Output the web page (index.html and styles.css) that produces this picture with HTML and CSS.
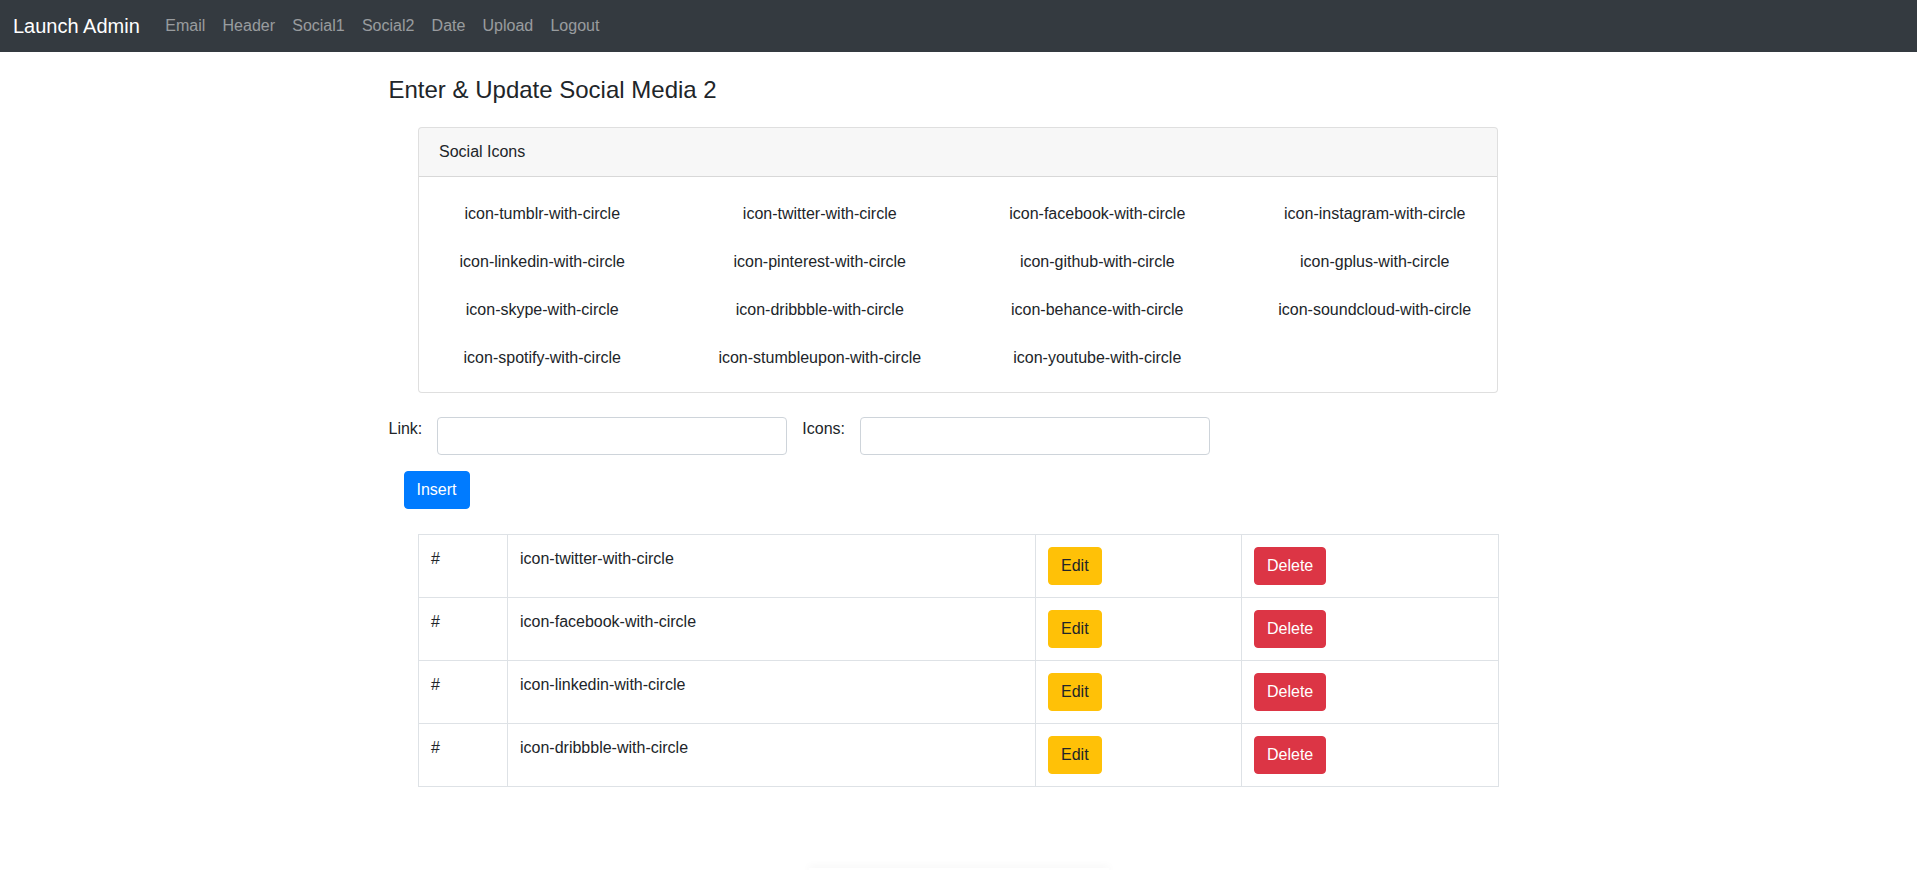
FILE: index.html
```html
<!DOCTYPE html>
<html lang="en">
<head>
<meta charset="utf-8">
<title>Launch Admin</title>
<link rel="stylesheet" href="styles.css">
</head>
<body>
<nav class="navbar">
  <a class="brand" href="#">Launch Admin</a>
  <ul class="nav">
    <li><a class="nav-link" href="#">Email</a></li>
    <li><a class="nav-link" href="#">Header</a></li>
    <li><a class="nav-link" href="#">Social1</a></li>
    <li><a class="nav-link" href="#">Social2</a></li>
    <li><a class="nav-link" href="#">Date</a></li>
    <li><a class="nav-link" href="#">Upload</a></li>
    <li><a class="nav-link" href="#">Logout</a></li>
  </ul>
</nav>
<main class="container">
  <h4 class="title">Enter &amp; Update Social Media 2</h4>
  <div class="card">
    <div class="card-header">Social Icons</div>
    <div class="card-body">
      <div class="icon-grid">
        <div class="icon-name">icon-tumblr-with-circle</div>
        <div class="icon-name">icon-twitter-with-circle</div>
        <div class="icon-name">icon-facebook-with-circle</div>
        <div class="icon-name">icon-instagram-with-circle</div>
        <div class="icon-name">icon-linkedin-with-circle</div>
        <div class="icon-name">icon-pinterest-with-circle</div>
        <div class="icon-name">icon-github-with-circle</div>
        <div class="icon-name">icon-gplus-with-circle</div>
        <div class="icon-name">icon-skype-with-circle</div>
        <div class="icon-name">icon-dribbble-with-circle</div>
        <div class="icon-name">icon-behance-with-circle</div>
        <div class="icon-name">icon-soundcloud-with-circle</div>
        <div class="icon-name">icon-spotify-with-circle</div>
        <div class="icon-name">icon-stumbleupon-with-circle</div>
        <div class="icon-name">icon-youtube-with-circle</div>
      </div>
    </div>
  </div>
  <form class="entry-form">
    <div class="form-row">
      <label class="form-label" for="link">Link:</label>
      <input class="form-control" id="link" type="text">
      <label class="form-label" for="icons">Icons:</label>
      <input class="form-control" id="icons" type="text">
    </div>
    <button class="btn btn-primary insert-btn" type="button">Insert</button>
  </form>
  <table class="table">
    <colgroup>
      <col class="col-hash">
      <col class="col-name">
      <col class="col-edit">
      <col class="col-delete">
    </colgroup>
    <tbody>
      <tr>
        <td>#</td>
        <td>icon-twitter-with-circle</td>
        <td><button class="btn btn-warning" type="button">Edit</button></td>
        <td><button class="btn btn-danger" type="button">Delete</button></td>
      </tr>
      <tr>
        <td>#</td>
        <td>icon-facebook-with-circle</td>
        <td><button class="btn btn-warning" type="button">Edit</button></td>
        <td><button class="btn btn-danger" type="button">Delete</button></td>
      </tr>
      <tr>
        <td>#</td>
        <td>icon-linkedin-with-circle</td>
        <td><button class="btn btn-warning" type="button">Edit</button></td>
        <td><button class="btn btn-danger" type="button">Delete</button></td>
      </tr>
      <tr>
        <td>#</td>
        <td>icon-dribbble-with-circle</td>
        <td><button class="btn btn-warning" type="button">Edit</button></td>
        <td><button class="btn btn-danger" type="button">Delete</button></td>
      </tr>
    </tbody>
  </table>
  <div class="footer-shadow"></div>
</main>
</body>
</html>
```

FILE: styles.css
```css
* {
  box-sizing: border-box;
}

html, body {
  margin: 0;
  padding: 0;
}

body {
  font-family: "Liberation Sans", Arial, Helvetica, sans-serif;
  font-size: 16px;
  line-height: 24px;
  color: #212529;
  background: #fff;
}

/* Navbar */
.navbar {
  display: flex;
  align-items: center;
  height: 52px;
  padding: 0 13px;
  background: #343a40;
}

.brand {
  font-size: 20px;
  line-height: 30px;
  color: #fff;
  text-decoration: none;
  margin-right: 17px;
  white-space: nowrap;
}

.nav {
  display: flex;
  list-style: none;
  margin: 0;
  padding: 0;
}

.nav-link {
  display: block;
  padding: 8px 8.6px;
  color: rgba(255, 255, 255, 0.5);
  text-decoration: none;
}

/* Main container */
.container {
  width: 1140px;
  margin: 0 auto;
}

.title {
  font-size: 24px;
  font-weight: 400;
  line-height: 28.8px;
  margin: 23.5px 0 22.7px;
}

/* Card */
.card {
  width: 1080px;
  margin-left: 29.5px;
  border: 1px solid rgba(0, 0, 0, 0.125);
  border-radius: 4px;
  background: #fff;
}

.card-header {
  padding: 12px 20px;
  background: rgba(0, 0, 0, 0.03);
  border-bottom: 1px solid rgba(0, 0, 0, 0.125);
  border-radius: 3px 3px 0 0;
}

.card-body {
  padding: 25px 0 22px;
}

.icon-grid {
  display: grid;
  grid-template-columns: repeat(4, 1fr);
  row-gap: 24px;
  width: 1110px;
  margin-left: -15.5px;
}

.icon-name {
  text-align: center;
  white-space: nowrap;
}

/* Form */
.entry-form {
  margin-top: 24.5px;
}

.form-row {
  display: flex;
  align-items: flex-start;
}

.form-label {
  margin-right: 15px;
}

.form-control {
  width: 350px;
  height: 38px;
  margin-right: 15px;
  padding: 6px 12px;
  font: inherit;
  color: #495057;
  background: #fff;
  border: 1px solid #ced4da;
  border-radius: 4px;
}

.btn {
  display: inline-block;
  vertical-align: top;
  padding: 6px 12px;
  font: inherit;
  line-height: 24px;
  border: 1px solid transparent;
  border-radius: 4px;
  cursor: pointer;
}

.btn-primary {
  color: #fff;
  background: #007bff;
  border-color: #007bff;
}

.btn-warning {
  color: #212529;
  background: #ffc107;
  border-color: #ffc107;
}

.btn-danger {
  color: #fff;
  background: #dc3545;
  border-color: #dc3545;
}

.insert-btn {
  margin: 16px 0 0 15px;
}

/* Table */
.table {
  width: 1080px;
  margin: 24.5px 0 0 29.5px;
  border-collapse: collapse;
  table-layout: fixed;
}

.col-hash { width: 89px; }
.col-name { width: 528px; }
.col-edit { width: 206px; }
.col-delete { width: 257px; }

.table td {
  padding: 12px;
  vertical-align: top;
  border: 1px solid #dee2e6;
}

.footer-shadow {
  width: 300px;
  height: 2px;
  margin: 81px auto 0;
  box-shadow: 0 0 8px rgba(0, 0, 0, 0.12);
}
```
